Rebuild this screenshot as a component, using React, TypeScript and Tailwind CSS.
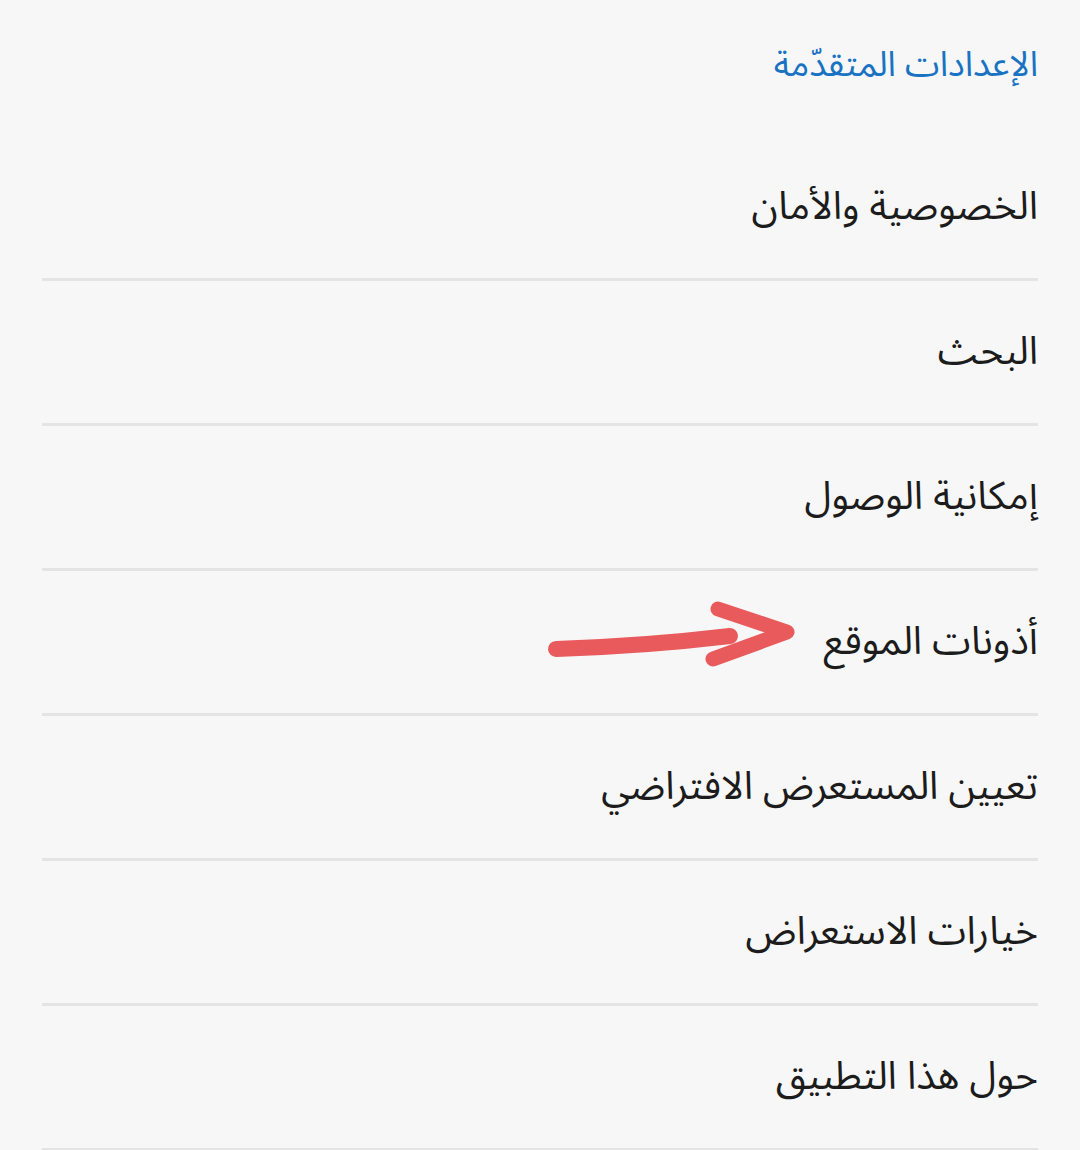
const items = [
  "الخصوصية والأمان",
  "البحث",
  "إمكانية الوصول",
  "أذونات الموقع",
  "تعيين المستعرض الافتراضي",
  "خيارات الاستعراض",
  "حول هذا التطبيق",
]

function Arrow() {
  return (
    <svg width="250" height="72" viewBox="0 0 250 72" fill="none" className="shrink-0 -mt-[14px]">
      <path d="M10 50 Q100 47 184 37" stroke="#e85a5c" strokeWidth="16" strokeLinecap="round" />
      <path d="M172 10 L241 33 L167 60" stroke="#e85a5c" strokeWidth="15" strokeLinecap="round" strokeLinejoin="round" />
    </svg>
  )
}

export default function App() {
  return (
    <div
      dir="rtl"
      className="w-[1080px] h-[1150px] bg-[#f7f7f7] overflow-hidden"
      style={{ fontFamily: '"Noto Sans Arabic", "Noto Sans", "DejaVu Sans", sans-serif' }}
    >
      <div className="h-[136px] px-[42px] flex items-start pt-[42px]">
        <h2 className="text-[35px] leading-[46px] text-[#1a73c2]">الإعدادات المتقدّمة</h2>
      </div>
      <div className="mx-[42px]">
        {items.map((item, i) => (
          <div
            key={item}
            className="h-[145px] border-b-[3px] border-[#e4e4e4] flex items-center gap-[28px]"
          >
            <span className="text-[39px] text-[#1c1c1c]">{item}</span>
            {i === 3 && <Arrow />}
          </div>
        ))}
      </div>
    </div>
  )
}
